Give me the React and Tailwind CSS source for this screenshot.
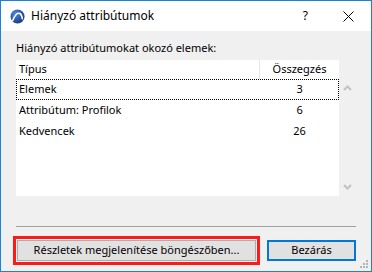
import React from 'react';

const font = { fontFamily: '"Noto Sans", "Liberation Sans", sans-serif' };

const rows = [
  { name: 'Elemek', count: 3, focused: true },
  { name: 'Attribútum: Profilok', count: 6 },
  { name: 'Kedvencek', count: 26 },
];

const Logo = () => (
  <svg width="15" height="15" viewBox="0 0 16 16">
    <defs>
      <radialGradient id="lg" cx="35%" cy="30%" r="75%">
        <stop offset="0%" stopColor="#4d86d9" />
        <stop offset="100%" stopColor="#173a86" />
      </radialGradient>
    </defs>
    <circle cx="8" cy="8" r="7.5" fill="url(#lg)" />
    <path d="M2.8 12.5 Q6.5 3 10.5 4.8 Q12.6 6 13.2 10.5" fill="none" stroke="#fff" strokeWidth="1.6" strokeLinecap="round" />
  </svg>
);

const Chevron = ({ up }) => (
  <svg width="9" height="6" viewBox="0 0 9 6">
    <path d={up ? 'M1 5 L4.5 1.5 L8 5' : 'M1 1 L4.5 4.5 L8 1'} fill="none" stroke="#c2c2c2" strokeWidth="2" />
  </svg>
);

const SizeGrip = () => (
  <svg width="10" height="10" viewBox="0 0 10 10" className="absolute right-[3px] bottom-[3px]">
    {[[8, 2], [5, 5], [8, 5], [2, 8], [5, 8], [8, 8]].map(([x, y], i) => (
      <rect key={i} x={x} y={y} width="2" height="2" fill="#b4b4b4" />
    ))}
  </svg>
);

export default function App() {
  return (
    <div className="relative w-[372px] h-[272px] border border-[#1883d7] flex flex-col text-black text-[11px]" style={font}>
      {/* Title bar */}
      <div className="h-[30px] bg-white flex items-center">
        <div className="ml-[9px] mt-[1px]">
          <Logo />
        </div>
        <span className="ml-[6px] text-[12px]">Hiányzó attribútumok</span>
        <span className="ml-auto text-[12px] mr-[35px]">?</span>
        <svg width="11" height="11" viewBox="0 0 11 11" className="mr-[17px]">
          <path d="M0.5 0.5 L10.5 10.5 M10.5 0.5 L0.5 10.5" stroke="#000" strokeWidth="1" />
        </svg>
      </div>

      {/* Body */}
      <div className="flex-1 bg-[#f0f0f0] pt-[9px] pl-[15px] pr-[15px] flex flex-col">
        <div className="h-[16px] leading-[16px] mb-[4px]">Hiányzó attribútumokat okozó elemek:</div>

        {/* List */}
        <div className="h-[136px] flex">
          <div className="w-[324px] bg-white flex flex-col">
            <div className="h-[19px] flex items-center">
              <div className="w-[243px] pl-[3px] h-full flex items-center">Típus</div>
              <div className="w-px h-full bg-[#e5e5e5]" />
              <div className="flex-1 text-center">Összegzés</div>
            </div>
            {rows.map((r) => (
              <div
                key={r.name}
                className={`h-[21px] flex items-center ${r.focused ? 'border border-dotted border-black' : 'border border-transparent'}`}
              >
                <div className="w-[243px] pl-[2px]">{r.name}</div>
                <div className="flex-1 text-center pl-[1px]">{r.count}</div>
              </div>
            ))}
          </div>
          <div className="w-[17px] flex flex-col justify-between pt-[25px] pb-[6px] items-center">
            <Chevron up />
            <Chevron />
          </div>
        </div>

        <div className="mt-[30px] h-px bg-[#a0a0a0]" />

        {/* Buttons */}
        <div className="mt-[9px] flex items-center">
          <div className="-ml-[3px] border-[3px] border-[#ff1a1a] p-px">
            <div className="w-[239px] h-[21px] bg-[#e1e1e1] border border-[#adadad] flex items-center justify-center">
              Részletek megjelenítése böngészőben...
            </div>
          </div>
          <div className="ml-[7px] w-[89px] h-[21px] bg-[#e1e1e1] border-2 border-[#0078d7] flex items-center justify-center">
            Bezárás
          </div>
        </div>
      </div>
      <SizeGrip />
    </div>
  );
}
